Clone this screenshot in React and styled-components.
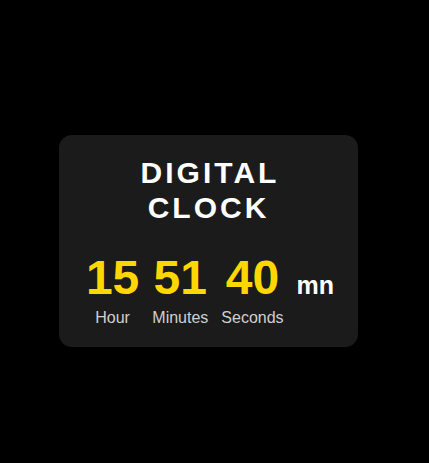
import styled, { createGlobalStyle } from 'styled-components';

const GlobalStyle = createGlobalStyle`
  html, body {
    margin: 0;
    padding: 0;
    background: #000;
  }
  body {
    font-family: "Liberation Sans", Arial, sans-serif;
    min-height: 463px;
  }
`;

const Page = styled.main`
  padding: 135px 0 0 59px;
`;

const Card = styled.section`
  width: 299px;
  height: 212px;
  box-sizing: border-box;
  padding: 20px 0 0;
  background: #1b1b1b;
  border-radius: 13px;
  display: flex;
  flex-direction: column;
  align-items: center;
`;

const Title = styled.h1`
  margin: 0;
  font-size: 30px;
  line-height: 35px;
  font-weight: 700;
  letter-spacing: 3px;
  text-indent: 3px;
  color: #fff;
  text-align: center;
`;

const Row = styled.div`
  display: flex;
  align-items: baseline;
  gap: 13px;
  margin-top: 25px;
  padding-left: 3px;
`;

const Unit = styled.div`
  display: flex;
  flex-direction: column;
  align-items: center;
`;

const Number = styled.span`
  font-size: 48px;
  font-weight: 700;
  line-height: 55px;
  color: #ffd700;
`;

const Label = styled.span`
  margin-top: 4px;
  font-size: 16px;
  line-height: 18px;
  color: #d0d0d0;
`;

const Suffix = styled.span`
  font-size: 25px;
  font-weight: 700;
  color: #fff;
`;

const units = [
  { value: '15', label: 'Hour' },
  { value: '51', label: 'Minutes' },
  { value: '40', label: 'Seconds' },
];

export default function App() {
  return (
    <>
      <GlobalStyle />
      <Page>
        <Card>
          <Title>
            DIGITAL
            <br />
            CLOCK
          </Title>
          <Row>
            {units.map((u) => (
              <Unit key={u.label}>
                <Number>{u.value}</Number>
                <Label>{u.label}</Label>
              </Unit>
            ))}
            <Suffix>mn</Suffix>
          </Row>
        </Card>
      </Page>
    </>
  );
}
